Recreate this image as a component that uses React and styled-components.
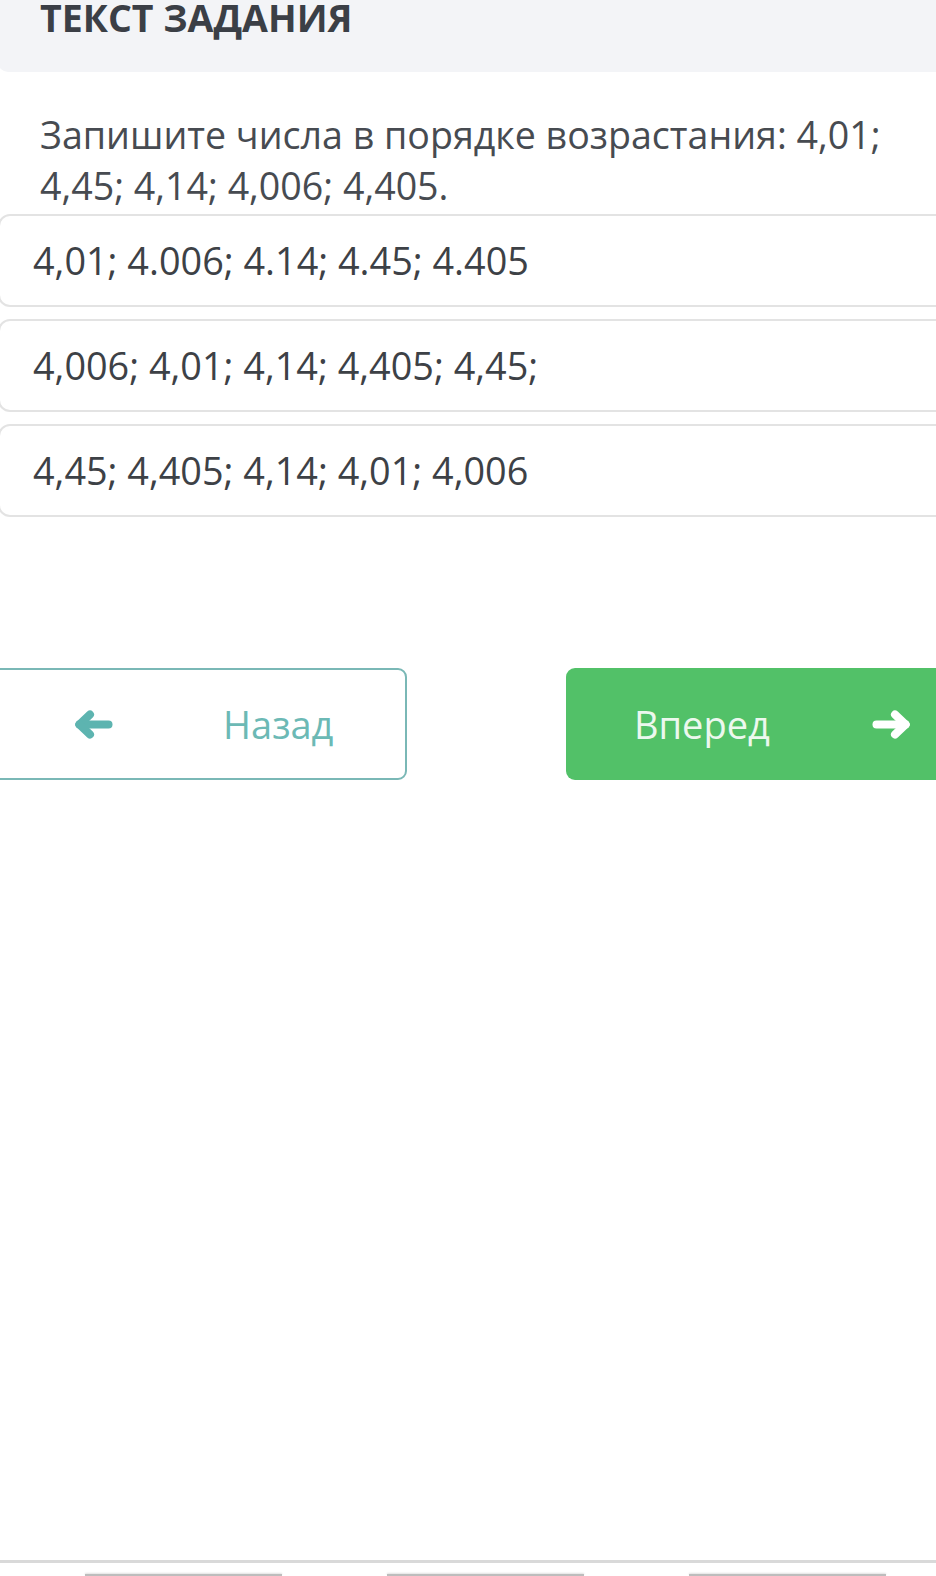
import React from 'react';
import styled, { createGlobalStyle } from 'styled-components';

const GlobalStyle = createGlobalStyle`
  html, body {
    margin: 0;
    padding: 0;
    background: #ffffff;
    overflow: hidden;
  }
  body {
    font-family: "Open Sans", "Noto Sans", "Liberation Sans", sans-serif;
  }
`;

const Page = styled.div`
  width: 936px;
  height: 1576px;
  display: flex;
  flex-direction: column;
  overflow: hidden;
`;
const Header = styled.div`
  height: 72px;
  margin-left: -2px;
  padding-left: 42px;
  background-color: #f3f4f7;
  border-bottom-left-radius: 10px;
  box-sizing: border-box;
`;
const HeaderTitle = styled.h2`
  margin: -1px 0 0;
  font-size: 37.5px;
  line-height: 37px;
  font-weight: 700;
  color: #3b3f46;
`;
const Question = styled.p`
  margin: 37px 0 0;
  padding: 0 40px;
  font-size: 37.6px;
  line-height: 51px;
  color: #474b51;
`;
const Options = styled.div`
  display: flex;
  flex-direction: column;
  gap: 12px;
  margin: 3px -30px 0 -2px;
`;
const Option = styled.div`
  padding: 19px 33px;
  border: 2px solid #e3e3e3;
  border-radius: 12px;
  font-size: 37.8px;
  line-height: 51px;
  color: #3d4146;
`;
const Nav = styled.div`
  display: flex;
  gap: 159px;
  margin: 151px 0 0 -10px;
`;
const NavButton = styled.button`
  flex: 0 0 417px;
  height: 112px;
  box-sizing: border-box;
  display: flex;
  align-items: center;
  border-radius: 9px;
  font-family: inherit;
  font-size: 38px;
  cursor: pointer;
`;
const BackButton = styled(NavButton)`
  padding: 0 0 0 83px;
  gap: 110px;
  background: #ffffff;
  border: 2px solid #7ab8b6;
  color: #6cb9b5;
`;
const NextButton = styled(NavButton)`
  padding: 0 0 0 68px;
  gap: 102px;
  background: #52c168;
  border: none;
  color: #ecf8ee;
`;
const Label = styled.span`
  line-height: 44px;
  margin-bottom: 1px;
`;
const ArrowSvg = styled.svg`
  flex-shrink: 0;
  transform: ${({ $flip }) => ($flip ? 'scaleX(-1)' : 'none')};
`;
const Footer = styled.div`
  margin-top: auto;
  height: 16px;
  border-top: 3px solid #d9d9d9;
  box-sizing: border-box;
  display: flex;
  padding: 11px 0 0 85px;
  gap: 105px;
`;
const Tab = styled.div`
  width: 197px;
  height: 2px;
  background: #bdbdbd;
  box-shadow: 0 -1px 2px rgba(0, 0, 0, 0.12);
`;

function Arrow({ color, flip }) {
  return (
    <ArrowSvg width="38" height="29" viewBox="0 0 38 29" $flip={flip}>
      <g stroke={color} strokeWidth="8" strokeLinecap="round" strokeLinejoin="round" fill="none">
        <path d="M4.5 14.5 H33.5" />
        <path d="M4.5 14.5 L15 4.5" />
        <path d="M4.5 14.5 L15 24.5" />
      </g>
    </ArrowSvg>
  );
}

const options = [
  '4,01; 4.006; 4.14; 4.45; 4.405',
  '4,006; 4,01; 4,14; 4,405; 4,45;',
  '4,45; 4,405; 4,14; 4,01; 4,006',
];

export default function App() {
  return (
    <>
      <GlobalStyle />
      <Page>
        <Header>
          <HeaderTitle>ТЕКСТ ЗАДАНИЯ</HeaderTitle>
        </Header>
        <Question>
          Запишите числа в порядке возрастания: 4,01; 4,45; 4,14; 4,006; 4,405.
        </Question>
        <Options>
          {options.map((o) => (
            <Option key={o}>{o}</Option>
          ))}
        </Options>
        <Nav>
          <BackButton>
            <Arrow color="#5db4b0" />
            <Label>Назад</Label>
          </BackButton>
          <NextButton>
            <Label>Вперед</Label>
            <Arrow color="#ffffff" flip />
          </NextButton>
        </Nav>
        <Footer>
          <Tab />
          <Tab />
          <Tab />
        </Footer>
      </Page>
    </>
  );
}
